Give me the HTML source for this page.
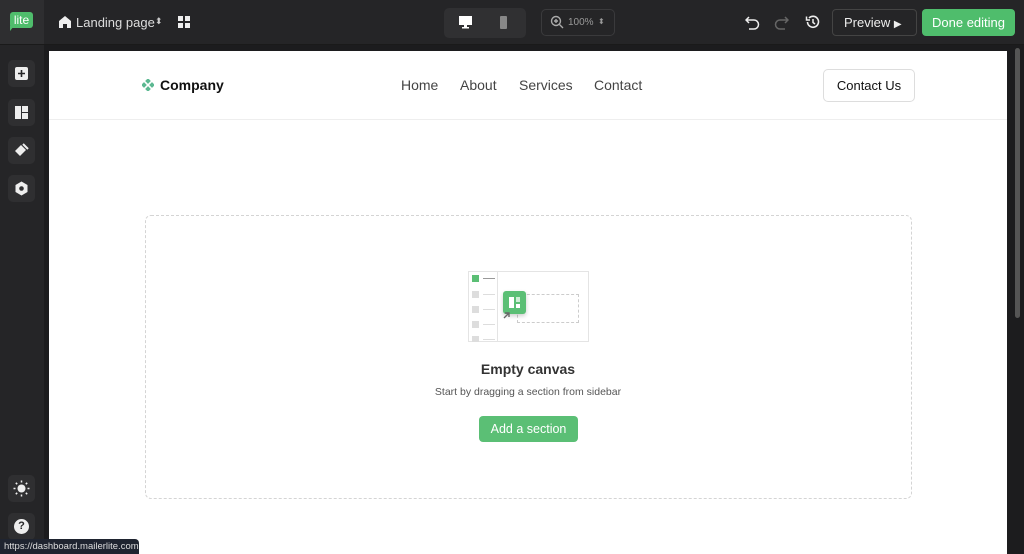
<!DOCTYPE html>
<html><head><meta charset="utf-8"><style>
*{box-sizing:border-box;margin:0;padding:0}
body{width:1024px;height:554px;overflow:hidden;background:#1c1c1e;font-family:"Liberation Sans",sans-serif;position:relative}
.top{position:absolute;left:0;top:0;width:1024px;height:45px;background:#252527;border-bottom:1px solid #1a1a1a}
.logo{position:absolute;left:0;top:0;width:44px;height:44px;background:#2e2e30}
.side{position:absolute;left:0;top:45px;width:44px;height:509px;background:#252527}
.sb{position:absolute;left:8px;width:27px;height:27px;border-radius:5px;background:#2f2f31}
.canvas{position:absolute;left:49px;top:51px;width:958px;height:503px;background:#fff}
.t{position:absolute;white-space:nowrap}
.ln{position:absolute;height:1px;width:12px;background:#ddd;left:434px}
</style></head><body>
<div class="top"></div>
<div class="logo"><div style="position:absolute;left:10px;top:12px;width:23px;height:16px;background:#4fbd6c;border-radius:3px;color:#fff;font-size:12px;line-height:16px;text-align:center">lite</div><div style="position:absolute;left:10px;top:26px;width:0;height:0;border-left:4px solid #4fbd6c;border-bottom:5px solid transparent"></div></div>
<svg class="t" style="left:58px;top:15px" width="14" height="14" viewBox="0 0 14 14"><path d="M1 6 L7 1 L13 6 V13 H9 V9 H5 V13 H1Z" fill="#eee"/></svg>
<div class="t" style="left:76px;top:15px;color:#ddd;font-size:13px">Landing page</div>
<div class="t" style="left:155px;top:16px;color:#ccc;font-size:9px">⬍</div>
<svg class="t" style="left:178px;top:16px" width="12" height="12"><rect x="0" y="0" width="5" height="5" fill="#eee"/><rect x="7" y="0" width="5" height="5" fill="#eee"/><rect x="0" y="7" width="5" height="5" fill="#eee"/><rect x="7" y="7" width="5" height="5" fill="#eee"/></svg>
<div class="t" style="left:444px;top:8px;width:82px;height:30px;border-radius:5px;background:#303032"></div>
<svg class="t" style="left:459px;top:16px" width="14" height="13"><rect x="0" y="0" width="13" height="9" fill="#fff"/><rect x="5" y="9" width="3" height="2" fill="#fff"/><rect x="3" y="11" width="7" height="1.5" fill="#fff"/></svg>
<div class="t" style="left:500px;top:16px;width:7px;height:13px;background:#888;border-radius:1px"></div>
<div class="t" style="left:541px;top:9px;width:74px;height:27px;border:1px solid #3a3a3c;border-radius:5px"></div>
<svg class="t" style="left:550px;top:15px" width="14" height="14" viewBox="0 0 14 14"><circle cx="6" cy="6" r="4.5" fill="none" stroke="#aaa" stroke-width="1.4"/><path d="M9.5 9.5 L13 13 M6 4 V8 M4 6 H8" stroke="#aaa" stroke-width="1.4"/></svg>
<div class="t" style="left:568px;top:17px;color:#999;font-size:10px">100%</div>
<div class="t" style="left:598px;top:17px;color:#999;font-size:8px">⬍</div>
<svg class="t" style="left:745px;top:15px" width="16" height="15" viewBox="0 0 16 15"><path d="M4 2 L1 5 L4 8 M1 5 H9 A4.5 4.5 0 0 1 9 14 H4" fill="none" stroke="#eee" stroke-width="1.5"/></svg>
<svg class="t" style="left:773px;top:15px" width="16" height="15" viewBox="0 0 16 15"><path d="M12 2 L15 5 L12 8 M15 5 H7 A4.5 4.5 0 0 0 7 14 H12" fill="none" stroke="#666" stroke-width="1.5"/></svg>
<svg class="t" style="left:805px;top:14px" width="16" height="16" viewBox="0 0 16 16"><path d="M2.5 8 A5.5 5.5 0 1 0 4 4" fill="none" stroke="#eee" stroke-width="1.6"/><path d="M1.5 2.5 V6 H5" fill="none" stroke="#eee" stroke-width="1.5"/><path d="M8 5 V8.5 L10 10" fill="none" stroke="#eee" stroke-width="1.5"/></svg>
<div class="t" style="left:832px;top:9px;width:85px;height:27px;border:1px solid #444;border-radius:4px;color:#eee;font-size:13px;line-height:25px;padding-left:11px">Preview <span style="font-size:10px">▶</span></div>
<div class="t" style="left:922px;top:9px;width:93px;height:27px;background:#4fbd6c;border-radius:4px;color:#fff;font-size:13px;line-height:27px;text-align:center">Done editing</div>

<div class="side"></div>
<div class="sb" style="top:60px"></div><div class="sb" style="top:99px"></div><div class="sb" style="top:137px"></div><div class="sb" style="top:175px"></div>
<div class="sb" style="top:475px"></div><div class="sb" style="top:513px"></div>
<svg class="t" style="left:15px;top:67px" width="13" height="13"><rect width="13" height="13" rx="2" fill="#eee"/><path d="M6.5 3V10M3 6.5H10" stroke="#252527" stroke-width="1.6"/></svg>
<svg class="t" style="left:15px;top:106px" width="13" height="13"><rect width="6" height="13" fill="#eee"/><rect x="7" width="6" height="6" fill="#eee"/><rect x="7" y="7" width="6" height="6" fill="#eee"/></svg>
<svg class="t" style="left:14px;top:143px" width="15" height="15" viewBox="0 0 15 15"><path d="M1 8 L7 2 L12 7 L6 13Z" fill="#eee"/><path d="M9 1 L14 6" stroke="#eee" stroke-width="2"/></svg>
<svg class="t" style="left:14px;top:181px" width="15" height="15" viewBox="0 0 15 15"><path d="M7.5 0.5 L13.5 4 V11 L7.5 14.5 L1.5 11 V4Z" fill="#eee"/><circle cx="7.5" cy="7.5" r="2.3" fill="#2f2f31"/></svg>
<svg class="t" style="left:13px;top:480px" width="17" height="17" viewBox="0 0 17 17"><circle cx="8.5" cy="8.5" r="4" fill="#eee"/><g stroke="#eee" stroke-width="1.5"><path d="M8.5 0.5V2.5M8.5 14.5V16.5M0.5 8.5H2.5M14.5 8.5H16.5M2.8 2.8L4.2 4.2M12.8 12.8L14.2 14.2M2.8 14.2L4.2 12.8M12.8 4.2L14.2 2.8"/></g></svg>
<div class="t" style="left:14px;top:519px;width:15px;height:15px;border-radius:50%;background:#eee;color:#252527;font-size:11px;font-weight:bold;text-align:center;line-height:15px">?</div>
<div class="t" style="left:1015px;top:48px;width:5px;height:270px;background:#555;border-radius:3px"></div>

<div class="canvas">
 <div class="t" style="left:0;top:68px;width:958px;height:1px;background:#eee"></div>
 <svg class="t" style="left:93px;top:28px" width="12" height="12" viewBox="0 0 12 12"><g fill="#5bb891"><rect x="4" y="0" width="4" height="4" transform="rotate(45 6 2)"/><rect x="4" y="8" width="4" height="4" transform="rotate(45 6 10)"/><rect x="0" y="4" width="4" height="4" transform="rotate(45 2 6)"/><rect x="8" y="4" width="4" height="4" transform="rotate(45 10 6)"/></g></svg>
 <div class="t" style="left:111px;top:26px;font-size:14px;font-weight:bold;color:#111">Company</div>
 <div class="t" style="left:352px;top:26px;font-size:14px;color:#444">Home</div>
 <div class="t" style="left:411px;top:26px;font-size:14px;color:#444">About</div>
 <div class="t" style="left:470px;top:26px;font-size:14px;color:#444">Services</div>
 <div class="t" style="left:545px;top:26px;font-size:14px;color:#444">Contact</div>
 <div class="t" style="left:774px;top:18px;width:92px;height:33px;border:1px solid #ddd;border-radius:5px;font-size:13px;color:#111;text-align:center;line-height:31px">Contact Us</div>
 <div class="t" style="left:96px;top:164px;width:767px;height:284px;border:1px dashed #d4d4d4;border-radius:6px"></div>
 <div class="t" style="left:419px;top:220px;width:121px;height:71px;border:1px solid #e4e4e4;background:#fff"></div>
 <div class="t" style="left:448px;top:220px;width:1px;height:71px;background:#e4e4e4"></div>
 <div class="t" style="left:423px;top:224px;width:7px;height:7px;background:#5bbf75"></div>
 <div class="t" style="left:423px;top:240px;width:7px;height:7px;background:#ddd"></div>
 <div class="t" style="left:423px;top:255px;width:7px;height:7px;background:#ddd"></div>
 <div class="t" style="left:423px;top:270px;width:7px;height:7px;background:#ddd"></div>
 <div class="t" style="left:423px;top:285px;width:7px;height:6px;background:#ddd"></div>
 <div class="ln" style="top:227px;background:#999"></div><div class="ln" style="top:243px"></div><div class="ln" style="top:258px"></div><div class="ln" style="top:273px"></div><div class="ln" style="top:288px"></div>
 <div class="t" style="left:468px;top:243px;width:62px;height:29px;border:1px dashed #ccc"></div>
 <div class="t" style="left:454px;top:240px;width:23px;height:23px;background:#5bbf75;border-radius:3px;box-shadow:0 2px 4px rgba(0,0,0,.2)"></div>
 <div class="t" style="left:460px;top:246px;width:5px;height:11px;background:#fff"></div>
 <div class="t" style="left:467px;top:246px;width:4px;height:5px;background:#cfeed6"></div>
 <div class="t" style="left:467px;top:253px;width:4px;height:4px;background:#fff"></div>
 <svg class="t" style="left:454px;top:260px" width="8" height="8"><path d="M1 7 L6 2 M2 2 H6 V6" stroke="#666" stroke-width="1.4" fill="none"/></svg>
 <div class="t" style="left:0;top:310px;width:958px;text-align:center;font-size:14px;font-weight:bold;color:#333">Empty canvas</div>
 <div class="t" style="left:0;top:335px;width:958px;text-align:center;font-size:10.5px;color:#555">Start by dragging a section from sidebar</div>
 <div class="t" style="left:430px;top:365px;width:99px;height:26px;background:#5bbf75;border-radius:4px;color:#fff;font-size:12.5px;text-align:center;line-height:26px">Add a section</div>
</div>
<div class="t" style="left:0;top:539px;width:139px;height:15px;background:#1f2430;border-radius:0 4px 0 0;color:#ddd;font-size:9.5px;line-height:15px;padding-left:4px;overflow:hidden">https://dashboard.mailerlite.com</div>
</body></html>
